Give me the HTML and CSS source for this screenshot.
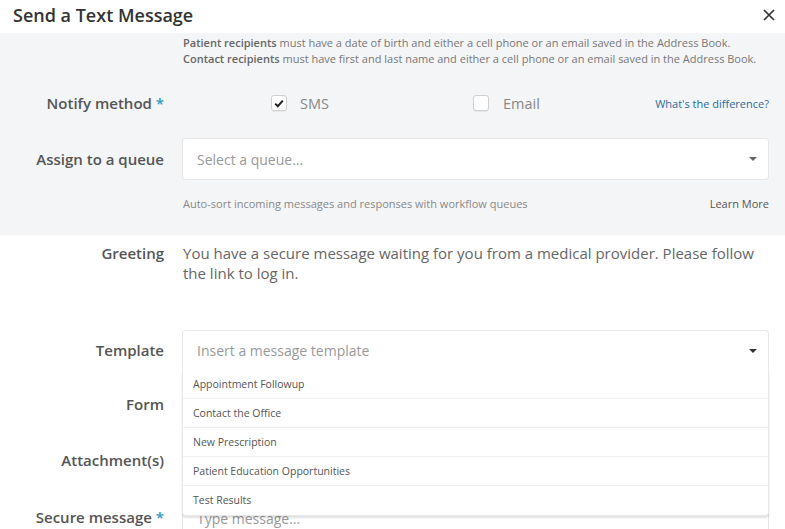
FILE: index.html
```html
<!DOCTYPE html>
<html>
<head>
<meta charset="utf-8">
<link rel="stylesheet" href="styles.css">
</head>
<body>
<div class="modal">
  <header class="head">
    <h1 class="title">Send a Text Message</h1>
    <span class="close" aria-label="Close"><svg width="12" height="12" viewBox="0 0 12 12"><path d="M1 1L11 11M11 1L1 11" stroke="#333" stroke-width="1.7" fill="none"/></svg></span>
  </header>

  <section class="gray">
    <div class="row info-row">
      <div></div>
      <div class="info">
        <div><b>Patient recipients</b> must have a date of birth and either a cell phone or an email saved in the Address Book.</div>
        <div><b>Contact recipients</b> must have first and last name and either a cell phone or an email saved in the Address Book.</div>
      </div>
    </div>

    <div class="row notify-row">
      <label class="lbl">Notify method <span class="req">*</span></label>
      <div class="opts">
        <span class="opt opt-sms"><span class="cb"><svg width="10" height="9" viewBox="0 0 10 9"><path d="M1.2 4.6L3.8 7.2L8.8 1.6" stroke="#222" stroke-width="2" fill="none"/></svg></span>SMS</span>
        <span class="opt opt-email"><span class="cb"></span>Email</span>
        <a class="diff">What's the difference?</a>
      </div>
    </div>

    <div class="row queue-row">
      <label class="lbl">Assign to a queue</label>
      <div class="select"><span class="ph">Select a queue...</span><span class="caret"></span></div>
    </div>

    <div class="row help-row">
      <div></div>
      <div class="help"><span>Auto-sort incoming messages and responses with workflow queues</span><a class="learn">Learn More</a></div>
    </div>
  </section>

  <section class="white">
    <div class="row greet-row">
      <label class="lbl">Greeting</label>
      <div class="greet">You have a secure message waiting for you from a medical provider. Please follow the link to log in.</div>
    </div>

    <div class="row tpl-row">
      <label class="lbl">Template</label>
      <div class="tpl">
        <div class="tpl-input"><span class="ph">Insert a message template</span><span class="caret dark"></span></div>
        <ul class="menu">
          <li>Appointment Followup</li>
          <li>Contact the Office</li>
          <li>New Prescription</li>
          <li>Patient Education Opportunities</li>
          <li>Test Results</li>
        </ul>
      </div>
    </div>

    <div class="row form-row">
      <label class="lbl">Form</label>
      <div></div>
    </div>

    <div class="row att-row">
      <label class="lbl">Attachment(s)</label>
      <div></div>
    </div>

    <div class="row msg-row">
      <label class="lbl">Secure message <span class="req">*</span></label>
      <div class="textarea"><span class="ph">Type message...</span></div>
    </div>
  </section>
</div>
</body>
</html>
```

FILE: styles.css
```css
html, body {
  margin: 0;
  padding: 0;
  background: #fff;
  overflow: hidden;
}
body {
  font-family: "Open Sans", "Noto Sans", sans-serif;
  color: #555;
  width: 785px;
  height: 529px;
}
.modal {
  width: 785px;
  height: 529px;
  overflow: hidden;
}
.head {
  height: 33px;
  display: flex;
  align-items: center;
  justify-content: space-between;
  padding: 0 10px 0 13px;
  box-sizing: border-box;
}
.title {
  margin: 0;
  font-size: 18px;
  font-weight: 600;
  color: #333;
  line-height: 30px;
  margin-top: -3px;
}
.close {
  display: flex;
  margin-top: -4px;
}
.row {
  display: grid;
  grid-template-columns: 164px 587px;
  column-gap: 18px;
  align-items: center;
}
.lbl {
  text-align: right;
  font-size: 15px;
  font-weight: 600;
  color: #555;
  white-space: nowrap;
  line-height: 20px;
}
.req {
  color: #2b9ac9;
}
.gray {
  background: #f4f5f7;
  padding: 2px 0 23px;
}
.info {
  font-size: 11px;
  line-height: 16px;
  color: #777;
  white-space: nowrap;
  margin-left: 1px;
}
.info b {
  font-weight: 600;
  color: #666;
}
.notify-row {
  margin-top: 21px;
  height: 30px;
}
.opts {
  display: flex;
  align-items: center;
  font-size: 14.5px;
  color: #888;
}
.opt {
  display: flex;
  align-items: center;
}
.opt-sms {
  margin-left: 89px;
  width: 202px;
}
.cb {
  width: 16px;
  height: 16px;
  box-sizing: border-box;
  border: 1px solid #d0d0d0;
  border-radius: 3px;
  background: #fff;
  display: inline-flex;
  align-items: center;
  justify-content: center;
  margin-right: 13px;
  box-shadow: 0 1px 1px rgba(0,0,0,0.06);
}
.opt-email .cb {
  margin-right: 14px;
}
.diff {
  margin-left: auto;
  font-size: 11px;
  color: #2a6c9c;
}
.queue-row {
  margin-top: 20px;
}
.select {
  height: 42px;
  box-sizing: border-box;
  background: #fff;
  border: 1px solid #e6e6e6;
  border-radius: 3px;
  display: flex;
  align-items: center;
  justify-content: space-between;
  padding: 0 11px 0 14px;
}
.ph {
  font-size: 14px;
  color: #999;
}
.caret {
  width: 0;
  height: 0;
  border-left: 4px solid transparent;
  border-right: 4px solid transparent;
  border-top: 4px solid #666;
}
.caret.dark {
  border-top-color: #333;
}
.help-row {
  margin-top: 16px;
}
.help {
  display: flex;
  justify-content: space-between;
  font-size: 11px;
  line-height: 16px;
  color: #888;
  margin-left: 1px;
}
.learn {
  color: #555;
}
.white {
  padding-top: 8px;
}
.greet-row {
  align-items: start;
}
.greet {
  font-size: 15px;
  line-height: 20px;
  color: #666;
  margin-left: 1px;
}
.tpl-row {
  margin-top: 47px;
  position: relative;
  z-index: 2;
}
.tpl {
  position: relative;
}
.tpl-input {
  height: 40px;
  box-sizing: border-box;
  border: 1px solid #e8e8e8;
  border-bottom: none;
  border-radius: 4px 4px 0 0;
  background: #fff;
  display: flex;
  align-items: center;
  justify-content: space-between;
  padding: 0 11px 0 14px;
}
.menu {
  position: absolute;
  left: 0;
  right: 0;
  top: 40px;
  margin: 0;
  padding: 0;
  list-style: none;
  background: #fff;
  border: 1px solid #e8e8e8;
  border-top: none;
  border-radius: 0 0 4px 4px;
  box-shadow: 0 2px 2px rgba(0,0,0,0.12);
}
.menu li {
  height: 29px;
  box-sizing: border-box;
  padding-left: 10px;
  font-size: 10.5px;
  line-height: 28px;
  color: #555;
  border-bottom: 1px solid #eeeeee;
}
.menu li:last-child {
  border-bottom: none;
}
.form-row {
  margin-top: 14px;
  height: 40px;
}
.att-row {
  margin-top: 16px;
  height: 40px;
}
.msg-row {
  margin-top: 19px;
  align-items: start;
}
.msg-row .lbl {
  margin-top: 8px;
}
.textarea {
  height: 60px;
  box-sizing: border-box;
  border: 1px solid #e6e6e6;
  border-radius: 3px;
  padding: 8px 14px;
  line-height: 20px;
}
```
